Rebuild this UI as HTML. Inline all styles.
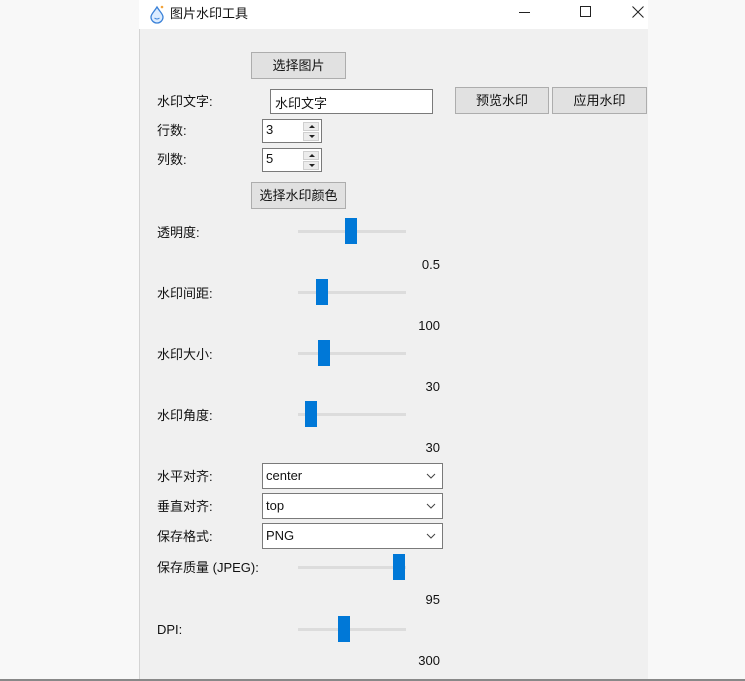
<!DOCTYPE html>
<html><head><meta charset="utf-8"><style>
*{box-sizing:border-box;margin:0;padding:0}
body{width:745px;height:681px;background:#f8f8f8;position:relative;overflow:hidden;font-family:"Liberation Sans","Noto Sans CJK SC",sans-serif;font-size:13px;color:#111}
.a{position:absolute}
.win{left:139px;top:0;width:509px;height:679px;background:#f0f0f0;border-left:1px solid #d4d4d4}
.title{left:139px;top:0;width:509px;height:29px;background:#fff}
.btn{position:absolute;background:#e1e1e1;border:1px solid #adadad;text-align:center;font-size:13px}
.in{position:absolute;background:#fff;border:1px solid #7a7a7a}
.lbl{position:absolute;font-size:13px;line-height:16px}
.track{position:absolute;height:3px;background:#dcdcdc;width:108px;left:298px}
.thumb{position:absolute;width:12px;height:26px;background:#0078d7}
.val{position:absolute;right:305px;font-size:13px;line-height:16px}
.combo{position:absolute;left:262px;width:181px;height:26px;background:#fff;border:1px solid #7a7a7a;padding:5px 3px;font-size:13px;line-height:14px}
.combo svg{position:absolute;right:6px;top:9px}
.sp{position:absolute;right:2px;width:16px;height:9px;background:#ececec;border:1px solid #cfcfcf}
.sp:after{content:"";position:absolute;left:5px;border-left:3px solid transparent;border-right:3px solid transparent}
.up:after{top:2px;border-bottom:3px solid #222}
.dn:after{top:2px;border-top:3px solid #222}
</style></head><body>
<div class="a win"></div>
<div class="a title"></div>
<div class="a" style="left:0;width:745px;height:2px;top:679px;background:#888"></div>
<svg class="a" style="left:148px;top:4px" width="18" height="20" viewBox="0 0 18 20"><path d="M9 3 C6 8 3 10 3 13 a6 6 0 0 0 12 0 C15 10 12 8 9 3Z" fill="#dcecff" stroke="#3b82d8" stroke-width="1.3"/><path d="M6.5 14 q2.5 2 5 0" stroke="#3b82d8" fill="none"/><circle cx="14" cy="3" r="1.3" fill="#f2a33a"/></svg>
<div class="lbl" style="left:170px;top:6px">图片水印工具</div>
<div class="a" style="left:519px;top:12px;width:11px;height:1px;background:#222"></div>
<div class="a" style="left:580px;top:6px;width:11px;height:11px;border:1px solid #222"></div>
<svg class="a" style="left:632px;top:6px" width="12" height="12"><path d="M0.5 0.5L11.5 11.5M11.5 0.5L0.5 11.5" stroke="#222" stroke-width="1"/></svg>

<div class="btn" style="left:251px;top:52px;width:95px;height:27px;line-height:25px">选择图片</div>
<div class="lbl" style="left:157px;top:94px">水印文字:</div>
<div class="in" style="left:270px;top:89px;width:163px;height:25px;padding:3px 4px">水印文字</div>
<div class="btn" style="left:455px;top:87px;width:94px;height:27px;line-height:25px">预览水印</div>
<div class="btn" style="left:552px;top:87px;width:95px;height:27px;line-height:25px">应用水印</div>
<div class="lbl" style="left:157px;top:123px">行数:</div>
<div class="in" style="left:262px;top:119px;width:60px;height:24px;padding:2px 3px">3<div class="sp up" style="top:2px"></div><div class="sp dn" style="top:12px"></div></div>
<div class="lbl" style="left:157px;top:152px">列数:</div>
<div class="in" style="left:262px;top:148px;width:60px;height:24px;padding:2px 3px">5<div class="sp up" style="top:2px"></div><div class="sp dn" style="top:12px"></div></div>
<div class="btn" style="left:251px;top:182px;width:95px;height:27px;line-height:25px">选择水印颜色</div>

<div class="lbl" style="left:157px;top:225px">透明度:</div>
<div class="track" style="top:230px"></div><div class="thumb" style="left:345px;top:218px"></div>
<div class="val" style="top:257px">0.5</div>
<div class="lbl" style="left:157px;top:286px">水印间距:</div>
<div class="track" style="top:291px"></div><div class="thumb" style="left:316px;top:279px"></div>
<div class="val" style="top:318px">100</div>
<div class="lbl" style="left:157px;top:347px">水印大小:</div>
<div class="track" style="top:352px"></div><div class="thumb" style="left:318px;top:340px"></div>
<div class="val" style="top:379px">30</div>
<div class="lbl" style="left:157px;top:408px">水印角度:</div>
<div class="track" style="top:413px"></div><div class="thumb" style="left:305px;top:401px"></div>
<div class="val" style="top:440px">30</div>

<div class="lbl" style="left:157px;top:469px">水平对齐:</div>
<div class="combo" style="top:463px">center<svg width="10" height="6"><path d="M1 1l4 4 4-4" stroke="#444" fill="none"/></svg></div>
<div class="lbl" style="left:157px;top:499px">垂直对齐:</div>
<div class="combo" style="top:493px">top<svg width="10" height="6"><path d="M1 1l4 4 4-4" stroke="#444" fill="none"/></svg></div>
<div class="lbl" style="left:157px;top:529px">保存格式:</div>
<div class="combo" style="top:523px">PNG<svg width="10" height="6"><path d="M1 1l4 4 4-4" stroke="#444" fill="none"/></svg></div>
<div class="lbl" style="left:157px;top:560px">保存质量 (JPEG):</div>
<div class="track" style="top:566px"></div><div class="thumb" style="left:393px;top:554px"></div>
<div class="val" style="top:592px">95</div>
<div class="lbl" style="left:157px;top:622px">DPI:</div>
<div class="track" style="top:628px"></div><div class="thumb" style="left:338px;top:616px"></div>
<div class="val" style="top:653px">300</div>
</body></html>
